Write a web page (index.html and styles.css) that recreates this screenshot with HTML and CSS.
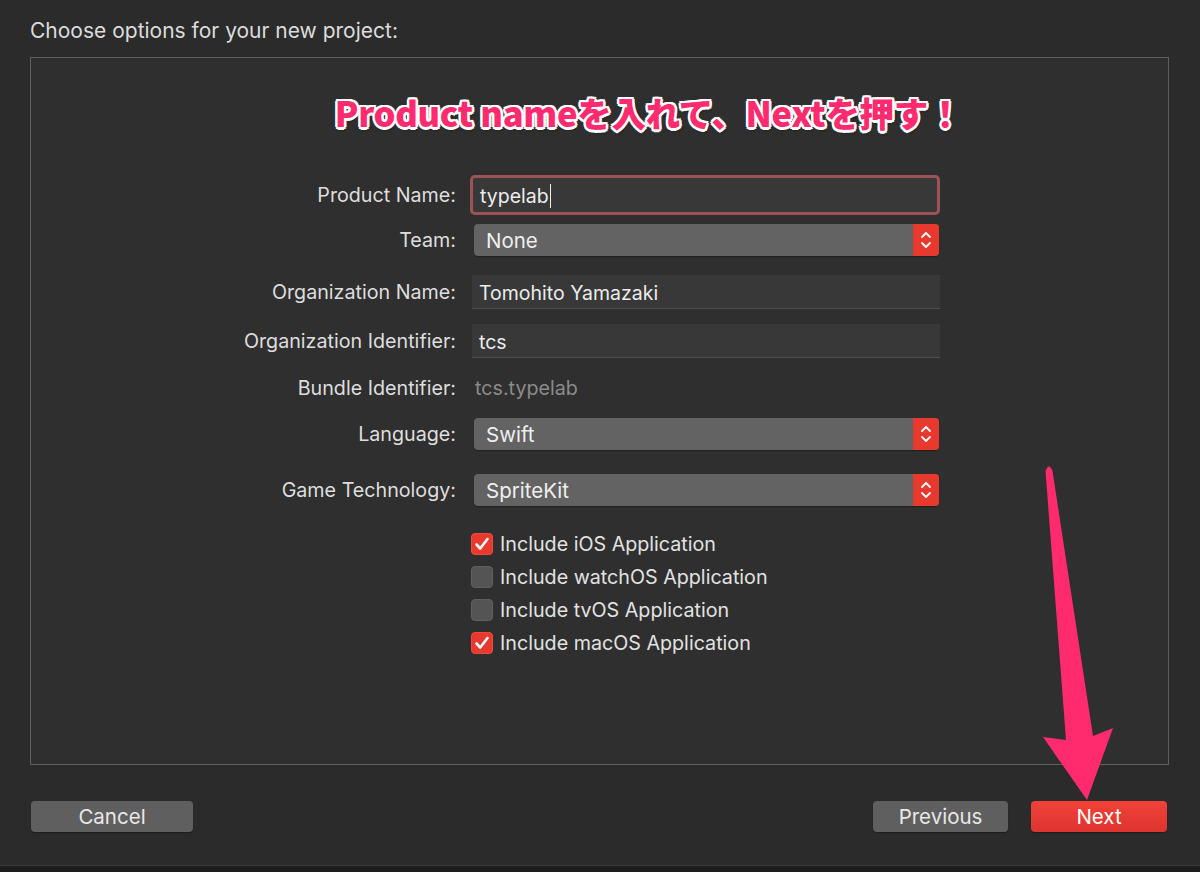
FILE: index.html
```html
<!DOCTYPE html>
<html lang="ja">
<head>
    <meta charset="UTF-8">
    <meta name="viewport" content="width=device-width, initial-scale=1.0">
    <title>Choose options for your new project</title>
    <link rel="stylesheet" href="styles.css">
</head>
<body>
    <div class="sheet">
        <h1 class="title">Choose options for your new project:</h1>

        <div class="panel">
            <p class="note">Product nameを入れて、Nextを押す！</p>

            <form class="options">
                <div class="row row-name">
                    <label for="productName">Product Name:</label>
                    <div class="field focused"><span id="productName">typelab</span><span class="caret"></span></div>
                </div>
                <div class="row row-team">
                    <label>Team:</label>
                    <div class="popup">
                        <span>None</span>
                        <span class="stepper">
                            <svg width="14" height="22" viewBox="0 0 14 22"><path d="M3 8 L7 4 L11 8 M3 14 L7 18 L11 14" fill="none" stroke="#fff" stroke-width="1.8" stroke-linecap="round" stroke-linejoin="round"/></svg>
                        </span>
                    </div>
                </div>
                <div class="row row-org">
                    <label>Organization Name:</label>
                    <div class="field">Tomohito Yamazaki</div>
                </div>
                <div class="row row-orgid">
                    <label>Organization Identifier:</label>
                    <div class="field">tcs</div>
                </div>
                <div class="row row-bundle">
                    <label>Bundle Identifier:</label>
                    <div class="value">tcs.typelab</div>
                </div>
                <div class="row row-lang">
                    <label>Language:</label>
                    <div class="popup">
                        <span>Swift</span>
                        <span class="stepper">
                            <svg width="14" height="22" viewBox="0 0 14 22"><path d="M3 8 L7 4 L11 8 M3 14 L7 18 L11 14" fill="none" stroke="#fff" stroke-width="1.8" stroke-linecap="round" stroke-linejoin="round"/></svg>
                        </span>
                    </div>
                </div>
                <div class="row row-game">
                    <label>Game Technology:</label>
                    <div class="popup">
                        <span>SpriteKit</span>
                        <span class="stepper">
                            <svg width="14" height="22" viewBox="0 0 14 22"><path d="M3 8 L7 4 L11 8 M3 14 L7 18 L11 14" fill="none" stroke="#fff" stroke-width="1.8" stroke-linecap="round" stroke-linejoin="round"/></svg>
                        </span>
                    </div>
                </div>

                <div class="checks">
                    <div class="check on">
                        <span class="box"><svg width="22" height="22" viewBox="0 0 22 22"><path d="M5.5 11.5 L9.2 15.5 L16.5 6" fill="none" stroke="#fff" stroke-width="2.6" stroke-linecap="round" stroke-linejoin="round"/></svg></span>
                        <span>Include iOS Application</span>
                    </div>
                    <div class="check">
                        <span class="box"></span>
                        <span>Include watchOS Application</span>
                    </div>
                    <div class="check">
                        <span class="box"></span>
                        <span>Include tvOS Application</span>
                    </div>
                    <div class="check on">
                        <span class="box"><svg width="22" height="22" viewBox="0 0 22 22"><path d="M5.5 11.5 L9.2 15.5 L16.5 6" fill="none" stroke="#fff" stroke-width="2.6" stroke-linecap="round" stroke-linejoin="round"/></svg></span>
                        <span>Include macOS Application</span>
                    </div>
                </div>
            </form>
        </div>

        <div class="footer">
            <button type="button" class="btn">Cancel</button>
            <span class="spacer"></span>
            <button type="button" class="btn">Previous</button>
            <button type="button" class="btn btn-primary">Next</button>
        </div>
    </div>
    <div class="edge"></div>

    <!-- annotation arrow pointing at Next -->
    <svg class="arrow" width="1200" height="872" viewBox="0 0 1200 872">
        <path d="M1045.5 471 Q1049 462 1052.5 471 L1093 736 L1113 728 L1087 800 L1043 737 L1066 740 Z" fill="#ff2b6e"/>
    </svg>
</body>
</html>
```

FILE: styles.css
```css
body {
    margin: 0;
    background-color: #1b1b1b;
    font-family: Inter, "Noto Sans", sans-serif;
    color: #dedede;
}
.sheet {
    height: 865px;
    background-color: #2b2b2b;
}
.title {
    margin: 0;
    height: 57px;
    box-sizing: border-box;
    padding: 19px 30px 0;
    font-size: 21px;
    font-weight: 400;
    line-height: 24px;
    color: #dcdcdc;
}
.panel {
    margin: 0 31px 0 30px;
    height: 708px;
    box-sizing: border-box;
    border: 1px solid #5e5e5e;
    background-color: #2f2f2f;
}
.note {
    margin: 33px 0 0;
    padding-left: 98px;
    height: 42px;
    text-align: center;
    font-family: "Noto Sans CJK JP", sans-serif;
    font-size: 34.5px;
    font-weight: 900;
    line-height: 42px;
    letter-spacing: -0.3px;
    color: #ff2b6e;
    text-shadow:
        2.5px 0 0 #fff, -2.5px 0 0 #fff, 0 2.5px 0 #fff, 0 -2.5px 0 #fff,
        1.8px 1.8px 0 #fff, -1.8px 1.8px 0 #fff, 1.8px -1.8px 0 #fff, -1.8px -1.8px 0 #fff,
        1px 3px 3px rgba(0, 0, 0, 0.5);
}
.options {
    margin-top: 45px;
}
.row {
    display: grid;
    grid-template-columns: 425px 468px;
    column-gap: 16px;
    align-items: center;
    font-size: 19.7px;
}
.row label {
    text-align: right;
    color: #dedede;
}
.row-name { height: 34px; }
.row-team { height: 32px; margin-top: 12px; }
.row-org { height: 34px; margin-top: 19px; }
.row-orgid { height: 34px; margin-top: 15px; }
.row-bundle { height: 32px; margin-top: 14px; }
.row-lang { height: 32px; margin-top: 14px; }
.row-game { height: 32px; margin-top: 24px; }
.field {
    height: 34px;
    box-sizing: border-box;
    padding: 2px 7px 0;
    display: flex;
    align-items: center;
    background-color: #383838;
    border-bottom: 1px solid #4e4e4e;
    font-size: 19.5px;
    color: #ececec;
}
.field.focused {
    border: none;
    box-shadow: 0 0 0 3px #9b5356;
    border-radius: 2px;
    margin: 0 3px 0 1px;
}
.caret {
    display: inline-block;
    width: 1px;
    height: 24px;
    margin-left: 1px;
    background-color: #eee;
}
.value {
    padding-left: 3px;
    color: #8b8b8b;
}
.popup {
    height: 32px;
    margin: 0 1px 0 2px;
    display: flex;
    align-items: center;
    justify-content: space-between;
    background-color: #636363;
    border-radius: 4px;
    box-shadow: 0 1px 1px rgba(0, 0, 0, 0.35);
    overflow: hidden;
    font-size: 20.5px;
    color: #efefef;
}
.popup > span:first-child {
    padding-left: 12px;
}
.stepper {
    width: 26px;
    height: 32px;
    display: flex;
    align-items: center;
    justify-content: center;
    background-color: #e8392f;
}
.checks {
    margin-top: 21px;
    padding-left: 440px;
}
.check {
    height: 33px;
    display: flex;
    align-items: center;
    gap: 7px;
    font-size: 19.7px;
    color: #e2e2e2;
}
.box {
    width: 22px;
    height: 22px;
    box-sizing: border-box;
    border-radius: 4px;
    background-color: #545454;
    border: 1px solid #606060;
}
.check.on .box {
    background-color: #e8392f;
    border-color: #ef4a40;
}
.box svg {
    display: block;
    margin: -1px;
}
.footer {
    display: flex;
    align-items: center;
    gap: 23px;
    margin-top: 36px;
    padding: 0 33px 0 31px;
}
.spacer {
    flex: 1;
}
.btn {
    height: 31px;
    width: 135px;
    padding: 0;
    border: none;
    border-radius: 4px;
    background-color: #5f5f5f;
    box-shadow: 0 1px 1px rgba(0, 0, 0, 0.35);
    font-family: Inter, "Noto Sans", sans-serif;
    font-size: 20.5px;
    color: #e8e8e8;
    cursor: pointer;
}
.btn:first-child {
    width: 162px;
}
.btn-primary {
    width: 136px;
    background: linear-gradient(#f2423a, #dc342e);
    color: #fff;
}
.edge {
    height: 7px;
    background-color: #1c1c1c;
    border-top: 1px solid #3a3a3a;
    box-sizing: border-box;
}
.arrow {
    position: absolute;
    left: 0;
    top: 0;
    pointer-events: none;
}
```
